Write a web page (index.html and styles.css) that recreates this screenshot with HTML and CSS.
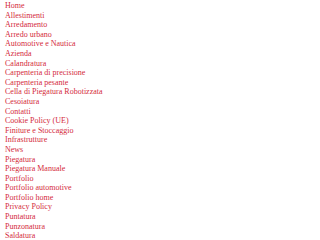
FILE: index.html
```html
<!DOCTYPE html>
<html lang="it">
<head>
    <meta charset="UTF-8">
    <meta name="viewport" content="width=device-width, initial-scale=1.0">
    <title>Sitemap</title>
    <link rel="stylesheet" href="styles.css">
</head>
<body>
    <ul class="sitemap">
        <li><a href="#">Home</a></li>
        <li><a href="#">Allestimenti</a></li>
        <li><a href="#">Arredamento</a></li>
        <li><a href="#">Arredo urbano</a></li>
        <li><a href="#">Automotive e Nautica</a></li>
        <li><a href="#">Azienda</a></li>
        <li><a href="#">Calandratura</a></li>
        <li><a href="#">Carpenteria di precisione</a></li>
        <li><a href="#">Carpenteria pesante</a></li>
        <li><a href="#">Cella di Piegatura Robotizzata</a></li>
        <li><a href="#">Cesoiatura</a></li>
        <li><a href="#">Contatti</a></li>
        <li><a href="#">Cookie Policy (UE)</a></li>
        <li><a href="#">Finiture e Stoccaggio</a></li>
        <li><a href="#">Infrastrutture</a></li>
        <li><a href="#">News</a></li>
        <li><a href="#">Piegatura</a></li>
        <li><a href="#">Piegatura Manuale</a></li>
        <li><a href="#">Portfolio</a></li>
        <li><a href="#">Portfolio automotive</a></li>
        <li><a href="#">Portfolio home</a></li>
        <li><a href="#">Privacy Policy</a></li>
        <li><a href="#">Puntatura</a></li>
        <li><a href="#">Punzonatura</a></li>
        <li><a href="#">Saldatura</a></li>
    </ul>
</body>
</html>
```

FILE: styles.css
```css
body {
    margin: 0;
    background-color: #fff;
    font-family: "Liberation Serif", "Times New Roman", serif;
}
.sitemap {
    list-style: none;
    margin: 0;
    padding: 1px 0 0 5px;
}
.sitemap li {
    font-size: 8px;
    line-height: 9.6px;
}
.sitemap a {
    color: #d42a3c;
    text-decoration: none;
}
```
